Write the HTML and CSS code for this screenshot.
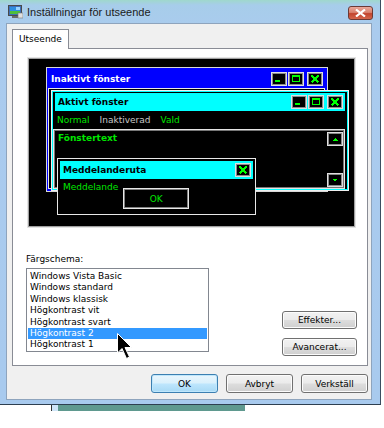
FILE: index.html
```html
<!DOCTYPE html>
<html>
<head>
<meta charset="utf-8">
<link rel="stylesheet" href="styles.css">
</head>
<body>
<div class="window">
  <div class="titlebar">
    <svg class="app-icon" width="15" height="14" viewBox="0 0 15 14">
      <rect x="0.5" y="0.5" width="13" height="10" fill="#3d6fb8" stroke="#4a4a4a"/>
      <rect x="2" y="2" width="10" height="7" fill="#2f8fe0"/>
      <rect x="2" y="6" width="10" height="3" fill="#4fbf3a"/>
      <rect x="8" y="2" width="4" height="3" fill="#9ad4ff"/>
      <rect x="4" y="11" width="6" height="2" fill="#6a6a6a"/>
      <rect x="10" y="8" width="5" height="5" fill="#e0e0e0" stroke="#777" stroke-width="0.6"/>
    </svg>
    <span class="title">Inställningar för utseende</span>
    <div class="close">
      <svg width="11" height="8" viewBox="0 0 11 8"><path d="M1 0.5 L10 7.5 M10 0.5 L1 7.5" stroke="#fff" stroke-width="2.2"/></svg>
    </div>
  </div>
  <div class="client">
    <div class="tabs"><div class="tab">Utseende</div></div>
    <div class="panel">
      <div class="preview">
        <div class="pwin inactive">
          <div class="ptitle blue">
            <span>Inaktivt fönster</span>
            <div class="pbtns">
              <i class="pb"><svg viewBox="0 0 12 10"><rect x="2" y="6" width="5" height="2" fill="#0f0"/></svg></i>
              <i class="pb"><svg viewBox="0 0 12 10"><path d="M2 1h8v2H2z M2 1h1v7H2z M9 1h1v7H9z M2 7h8v1H2z" fill="#0f0"/></svg></i>
              <i class="pb gap"><svg viewBox="0 0 12 10"><path d="M2.5 1.5 L9.5 8.5 M9.5 1.5 L2.5 8.5" stroke="#0f0" stroke-width="1.8"/></svg></i>
            </div>
          </div>
          <div class="pbody"></div>
        </div>
        <div class="pwin active">
          <div class="ptitle cyan">
            <span>Aktivt fönster</span>
            <div class="pbtns">
              <i class="pb"><svg viewBox="0 0 12 10"><rect x="2" y="6" width="5" height="2" fill="#0f0"/></svg></i>
              <i class="pb"><svg viewBox="0 0 12 10"><path d="M2 1h8v2H2z M2 1h1v7H2z M9 1h1v7H9z M2 7h8v1H2z" fill="#0f0"/></svg></i>
              <i class="pb gap"><svg viewBox="0 0 12 10"><path d="M2.5 1.5 L9.5 8.5 M9.5 1.5 L2.5 8.5" stroke="#0f0" stroke-width="1.8"/></svg></i>
            </div>
          </div>
          <div class="menu"><span class="g">Normal</span><span class="dis">Inaktiverad</span><span class="g">Vald</span></div>
          <div class="textarea">
            <div class="ttext">Fönstertext</div>
            <div class="sbar">
              <i class="pb"><svg viewBox="0 0 12 10"><path d="M3.5 6.5 L6 4 L8.5 6.5 Z" fill="#0f0"/></svg></i>
              <i class="pb"><svg viewBox="0 0 12 10"><path d="M3.5 4 L8.5 4 L6 6.5 Z" fill="#0f0"/></svg></i>
            </div>
          </div>
        </div>
        <div class="pwin msg">
          <div class="ptitle cyan">
            <span>Meddelanderuta</span>
            <i class="pb"><svg viewBox="0 0 12 10"><path d="M2.5 1.5 L9.5 8.5 M9.5 1.5 L2.5 8.5" stroke="#0f0" stroke-width="1.8"/></svg></i>
          </div>
          <div class="msgbody">
            <span class="g">Meddelande</span>
            <div class="okbtn">OK</div>
          </div>
        </div>
      </div>
      <div class="lower">
        <div class="schema">
          <div class="label">Färgschema:</div>
          <div class="list">
            <div class="item">Windows Vista Basic</div>
            <div class="item">Windows standard</div>
            <div class="item">Windows klassisk</div>
            <div class="item">Högkontrast vit</div>
            <div class="item">Högkontrast svart</div>
            <div class="item sel">Högkontrast 2</div>
            <div class="item">Högkontrast 1</div>
          </div>
        </div>
        <div class="side">
          <div class="btn">Effekter...</div>
          <div class="btn">Avancerat...</div>
        </div>
      </div>
    </div>
    <div class="footer">
      <div class="btn def">OK</div>
      <div class="btn">Avbryt</div>
      <div class="btn">Verkställ</div>
    </div>
  </div>
</div>
<div class="behind"><span class="bline"></span><span class="bblue"></span><span class="bteal"></span></div>
<svg class="cursor" width="16" height="27" viewBox="0 0 16 27">
  <path d="M0.5 0.5 L0.5 20 L5 15.5 L9.5 25.5 L12.5 24 L8 14.5 L14.5 14.5 Z" fill="#000" stroke="#fff" stroke-width="1"/>
</svg>
</body>
</html>
```

FILE: styles.css
```css
* { box-sizing: border-box; }
body {
  margin: 0;
  width: 384px;
  height: 428px;
  background: #fff;
  font-family: "DejaVu Sans", Tahoma, sans-serif;
  font-size: 9px;
  position: relative;
  overflow: hidden;
}
.window {
  width: 381px;
  height: 405px;
  background: linear-gradient(#9fd8cc 0px, #a7cdea 5px, #aacbee 30px, #a8caee 100%);
  border-right: 1px solid #3a4d60;
  border-bottom: 1px solid #2e3f50;
  display: flex;
  flex-direction: column;
}
.titlebar {
  height: 23px;
  display: flex;
  align-items: center;
  padding-left: 8px;
  position: relative;
}
.app-icon { margin-right: 4px; margin-top: 1px; }
.title {
  font-family: "Liberation Sans", Arial, sans-serif;
  font-size: 11px;
  color: #1b1b1b;
}
.close {
  position: absolute;
  left: 348px;
  top: 6px;
  width: 25px;
  height: 14px;
  border: 1px solid #6b3a35;
  border-radius: 3px;
  background: linear-gradient(#eaa99c 0%, #d9826f 45%, #c2442e 55%, #d4664c 100%);
  display: flex;
  align-items: center;
  justify-content: center;
}
.client {
  margin-left: 6px;
  width: 366px;
  height: 377px;
  background: #f0f0f0;
  border: 1px solid #8ea4bd;
  padding: 5px 2px 0 5px;
}
.tabs { display: flex; height: 19px; position: relative; z-index: 1; }
.tab {
  width: 57px;
  height: 20px;
  background: #fff;
  border: 1px solid #898c95;
  border-bottom: none;
  padding: 4px 0 0 6px;
  color: #000;
}
.panel {
  width: 356px;
  height: 318px;
  background: #fff;
  border: 1px solid #898c95;
  padding: 9px 0 0 15px;
}
.preview {
  width: 327px;
  height: 169px;
  background: #000;
  border: 1px solid #a0a0a0;
  box-shadow: 0 0 0 1px #e4e4e4;
  position: relative;
  color: #00ee00;
}
.pwin { position: absolute; }
.inactive {
  left: 17px; top: 8px; width: 282px; height: 125px;
  border: 1px solid #d8d8d8;
  background: #0000ff;
  padding: 1px 2px 2px 1px;
  display: flex; flex-direction: column;
}
.inactive .pbody { flex: 1; background: #000; border: 1px solid #e8e8e8; }
.active {
  left: 22px; top: 31px; width: 298px; height: 101px;
  border: 1px solid #f0f0f0;
  background: #000;
  padding: 1px;
  display: flex; flex-direction: column;
  box-shadow: inset 0 0 0 1px #00ffff;
}
.msg {
  left: 28px; top: 99px; width: 199px; height: 57px;
  border: 1px solid #e8e8e8;
  background: #000;
  padding: 2px;
  display: flex; flex-direction: column;
}
.ptitle {
  height: 19px;
  display: flex;
  align-items: center;
  justify-content: space-between;
  padding: 0 2px 0 3px;
  font-weight: bold;
  font-size: 9px;
  flex: none;
}
.ptitle.blue { background: #0000ff; color: #fff; }
.ptitle.cyan { background: #00ffff; color: #000; }
.active .ptitle { height: 18px; margin: 1px 2px 0 2px; }
.pbtns { display: flex; align-items: center; }
.pb {
  display: block;
  width: 16px;
  height: 14px;
  background: #000;
  border: 1px solid #e0e0e0;
  box-shadow: inset 0 0 0 1px #8a8a8a;
  margin-left: 1px;
  padding: 1px;
}
.pb.gap { margin-left: 3px; }
.pb svg { display: block; width: 12px; height: 10px; shape-rendering: crispEdges; }
.menu {
  height: 18px;
  display: flex;
  align-items: center;
  padding-left: 4px;
  gap: 10px;
  flex: none;
}
.g { color: #00e600; }
.dis { color: #c8c8c8; }
.textarea {
  flex: 1;
  margin: 0 2px 0 0;
  border: 1px solid #e6e6e6;
  box-shadow: inset 0 0 0 1px #777;
  display: flex;
  justify-content: space-between;
  padding: 2px 1px 1px 4px;
}
.ttext { font-weight: bold; color: #00e600; margin-top: 1px; }
.sbar { display: flex; flex-direction: column; justify-content: space-between; }
.msg .ptitle { height: 18px; }
.msgbody {
  flex: 1;
  display: flex;
  align-items: flex-start;
  padding: 3px 0 0 3px;
}
.okbtn {
  margin-left: 5px;
  margin-top: 6px;
  width: 66px;
  height: 21px;
  border: 1px solid #e8e8e8;
  box-shadow: inset 0 0 0 1px #808080;
  display: flex;
  align-items: center;
  justify-content: center;
  color: #00e600;
}
.lower { display: flex; margin-top: 26px; margin-left: -2px; }
.label { height: 13px; line-height: 13px; color: #000; margin-bottom: 2px; }
.list {
  width: 183px;
  height: 84px;
  border: 1px solid #828790;
  padding: 2px 1px;
  background: #fff;
}
.item { height: 11.4px; line-height: 11.4px; padding-left: 2px; color: #000; white-space: nowrap; }
.item.sel { background: #3399ff; color: #fff; }
.side { display: flex; flex-direction: column; gap: 9px; margin-top: 58px; margin-left: 73px; }
.btn {
  width: 75px;
  height: 18px;
  border: 1px solid #707070;
  border-radius: 3px;
  background: linear-gradient(#f2f2f2 0%, #ebebeb 48%, #dddddd 52%, #cfcfcf 100%);
  box-shadow: inset 0 0 0 1px #fcfcfc;
  display: flex;
  align-items: center;
  justify-content: center;
  color: #000;
}
.footer { display: flex; gap: 8px; padding-left: 139px; margin-top: 8px; }
.footer .btn { width: 67px; height: 19px; }
.btn.def {
  border-color: #3c7fb1;
  background: linear-gradient(#eaf6fd 0%, #d9f0fc 48%, #bee6fd 52%, #a7d9f5 100%);
  box-shadow: inset 0 0 0 1px #bfe7fc;
}
.behind { display: flex; height: 6px; padding-left: 51px; }
.bline { width: 1px; background: #333; }
.bblue { width: 6px; background: #cfe5f8; }
.bteal { width: 187px; background: #5f998f; }
.cursor { position: absolute; left: 117px; top: 333px; }
```
